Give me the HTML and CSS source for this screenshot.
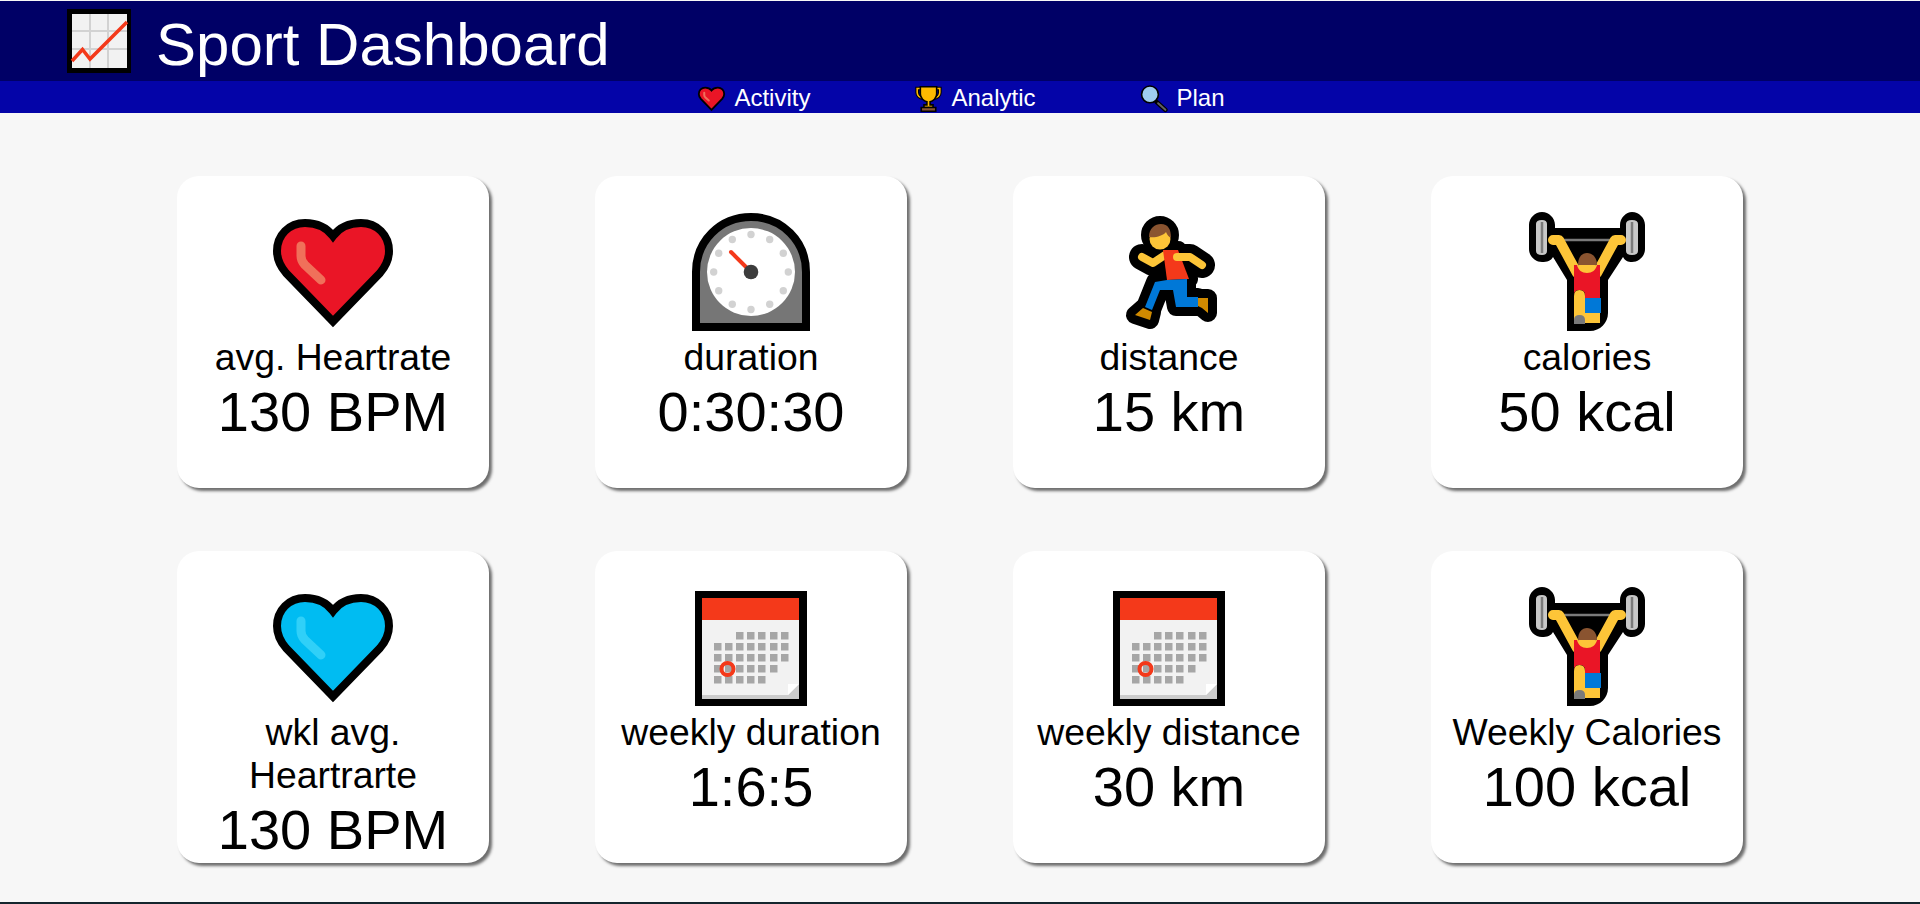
FILE: index.html
```html
<!DOCTYPE html>
<html>
<head>
    <title>Sport Dashboard</title>
    <link rel="stylesheet" href="styles.css">
</head>
<body>
<svg class="icon-defs">
    <symbol id="i-heart" viewBox="0 0 128 128">
        <path class="heart-fill" d="M64 29C70 21 80 16 92 16C108 16 120 28 120 44C120 52 117 59 111 66L64 114.500L17 66C11 59 8 52 8 44C8 28 20 16 36 16C48 16 58 21 64 29Z"/>
        <path class="heart-shine" d="M32 39V49Q32 54 36 58L52 73"/>
    </symbol>
    <symbol id="i-clock" viewBox="0 0 128 128">
        <path class="clock-case" d="M9 120V65C9 34 33 10 64 10C95 10 119 34 119 65V120Z"/>
        <circle class="clock-face" cx="64" cy="65" r="44"/>
        <g class="clock-dots">
            <circle cx="64" cy="27.5" r="3.7"/><circle cx="82.7" cy="32.5" r="3.7"/><circle cx="96.3" cy="46.2" r="3.7"/>
            <circle cx="101.3" cy="65" r="3.7"/><circle cx="96.3" cy="83.7" r="3.7"/><circle cx="82.7" cy="97.3" r="3.7"/>
            <circle cx="64" cy="102.5" r="3.7"/><circle cx="45.3" cy="97.3" r="3.7"/><circle cx="31.7" cy="83.7" r="3.7"/>
            <circle cx="26.7" cy="65" r="3.7"/><circle cx="31.7" cy="46.2" r="3.7"/><circle cx="45.3" cy="32.5" r="3.7"/>
        </g>
        <path class="clock-hand" d="M44 45L64 65"/>
        <circle class="clock-hub" cx="64" cy="65" r="7.3"/>
    </symbol>
    <symbol id="i-runner" viewBox="0 0 128 128">
        <g class="outline">
            <circle cx="55" cy="28" r="10"/>
            <path d="M58 43H73L84 72L62 73Z"/>
            <path class="outline-arms" d="M70 50H85L97 58M37 50L48 56L60 48"/>
            <path d="M62 73L82 72V90H93V100H71L68 83H55L47 103L40 100L50 75Z"/>
            <path d="M38 101L47 105L45 113L30 108ZM93 91H103V106L97 101L93 99Z"/>
        </g>
        <circle class="skin" cx="55" cy="32" r="10.5"/>
        <path class="hair" d="M44 30C44 21 50 17 56 17C63 17 66 22 66 31C64 30 62 28 61 25C58 29 50 31 44 30Z"/>
        <path class="limb skin-line" d="M37 50L48 56L60 48"/>
        <path class="shirt" d="M58 43H73L84 72L62 73Z"/>
        <path class="limb skin-line" d="M72 50H85L97 58"/>
        <path class="jeans" d="M62 73L82 72V90H93V100H71L68 83H55L47 103L40 100L50 75Z"/>
        <path class="shoe" d="M38 101L47 105L45 113L30 108ZM93 91H103V106L97 101L93 99Z"/>
    </symbol>
    <symbol id="i-lifter" viewBox="0 0 128 128">
        <path class="lifter-back" d="M19 5C26 5 32 11 32 18V21H97V18C97 11 103 5 109 5C116 5 122 11 122 18V42C122 49 116 55 109 55C105 55 102 54 100 50L85 73V106C85 116 77 124 67 124H44V73L30 50C28 54 24 55 19 55C12 55 6 49 6 42V18C6 11 12 5 19 5Z"/>
        <path class="bar" d="M30 33H98"/>
        <path class="plate" d="M13 17Q13 13 19 13Q24 13 24 17V44Q24 48 19 48Q13 48 13 44ZM103 17Q103 13 109 13Q115 13 115 17V44Q115 48 109 48Q103 48 103 44Z"/>
        <path class="plate-core" d="M19 15V46M109 15V46"/>
        <path class="limb-wide skin-line" d="M30 33H36L54 66M98 33H92L74 66"/>
        <path class="skin" d="M51 60Q64 53 77 60V72H51Z"/>
        <path class="hair" d="M55 58C55 50 59 46 64 46C69 46 74 50 74 58Z"/>
        <path class="top-red" d="M51 58H54C55 63 59 66 64 66C69 66 73 63 74 58H77V92H62V88Q62 83 56.500 83Q51 83 51 88Z"/>
        <path class="shorts" d="M62 91H78V106H62Z"/>
        <path class="skin" d="M51 89Q51 83 56.500 83Q62 83 62 89V106H77V116H51Z"/>
        <path class="sneaker" d="M51 117V113Q51 108 56.500 108Q62 108 62 113V117Z"/>
    </symbol>
    <symbol id="i-calendar" viewBox="0 0 128 128">
        <path class="cal-frame" d="M8 9H120V124H8Z"/>
        <path class="cal-page" d="M15 38H112V113H15Z"/>
        <path class="cal-foot" d="M15 113H112V117H15Z"/>
        <path class="cal-head" d="M15 16H112V38H15Z"/>
        <path class="cal-days" d="M49 50h7.500v7.500h-7.500zM60 50h7.500v7.500h-7.500zM71 50h7.500v7.500h-7.500zM83 50h7.500v7.500h-7.500zM94 50h7.500v7.500h-7.500z
            M27 61h7.500v7.500h-7.500zM38 61h7.500v7.500h-7.500zM49 61h7.500v7.500h-7.500zM60 61h7.500v7.500h-7.500zM71 61h7.500v7.500h-7.500zM83 61h7.500v7.500h-7.500zM94 61h7.500v7.500h-7.500z
            M27 72h7.500v7.500h-7.500zM38 72h7.500v7.500h-7.500zM49 72h7.500v7.500h-7.500zM60 72h7.500v7.500h-7.500zM71 72h7.500v7.500h-7.500zM83 72h7.500v7.500h-7.500zM94 72h7.500v7.500h-7.500z
            M27 83h7.500v7.500h-7.500zM38 83h7.500v7.500h-7.500zM49 83h7.500v7.500h-7.500zM60 83h7.500v7.500h-7.500zM71 83h7.500v7.500h-7.500zM83 83h7.500v7.500h-7.500z
            M27 94h7.500v7.500h-7.500zM38 94h7.500v7.500h-7.500zM49 94h7.500v7.500h-7.500zM60 94h7.500v7.500h-7.500zM71 94h7.500v7.500h-7.500z"/>
        <circle class="cal-mark" cx="40.500" cy="87" r="6"/>
        <path class="cal-fold" d="M101 113L112 102V113Z"/>
        <path class="cal-curl" d="M101 113V102H112Z"/>
    </symbol>
    <symbol id="i-chart" viewBox="0 0 64 64">
        <path d="M0 0H64V64H0Z"/>
        <path class="chart-paper" d="M5 5H60V59H5Z"/>
        <path class="chart-grid" d="M23 5V59M41 5V59M5 22H60M5 40H60"/>
        <path class="chart-line" d="M5 52L15.500 40.500L23 50L60 13"/>
    </symbol>
    <symbol id="i-trophy" viewBox="0 0 128 128">
        <path class="trophy-handle" d="M30 20H14V38C14 52 26 62 40 62M98 20H114V38C114 52 102 62 88 62"/>
        <path class="trophy-handle-gold" d="M30 20H14V38C14 52 26 62 40 62M98 20H114V38C114 52 102 62 88 62"/>
        <path class="trophy-cup" d="M28 12H100V44C100 62 84 76 71 78V92H84V104H44V92H57V78C44 76 28 62 28 44Z"/>
        <path class="trophy-base" d="M32 104H96V120H32Z"/>
    </symbol>
    <symbol id="i-search" viewBox="0 0 128 128">
        <path class="lens-handle" d="M74 80L112 114"/>
        <path class="lens-grip" d="M80 85L112 114"/>
        <circle class="lens" cx="44" cy="46" r="37"/>
    </symbol>
</svg>

<header class="top-bar">
    <svg class="logo"><use href="#i-chart"/></svg>
    <h1 class="brand">Sport Dashboard</h1>
</header>

<nav class="menu">
    <a class="menu-item"><svg class="menu-icon heart-red"><use href="#i-heart"/></svg>Activity</a>
    <a class="menu-item"><svg class="menu-icon"><use href="#i-trophy"/></svg>Analytic</a>
    <a class="menu-item"><svg class="menu-icon"><use href="#i-search"/></svg>Plan</a>
</nav>

<main class="board">
    <section class="card">
        <svg class="card-icon heart-red"><use href="#i-heart"/></svg>
        <div class="card-title">avg. Heartrate</div>
        <div class="card-value">130 BPM</div>
    </section>
    <section class="card">
        <svg class="card-icon"><use href="#i-clock"/></svg>
        <div class="card-title">duration</div>
        <div class="card-value">0:30:30</div>
    </section>
    <section class="card">
        <svg class="card-icon"><use href="#i-runner"/></svg>
        <div class="card-title">distance</div>
        <div class="card-value">15 km</div>
    </section>
    <section class="card">
        <svg class="card-icon"><use href="#i-lifter"/></svg>
        <div class="card-title">calories</div>
        <div class="card-value">50 kcal</div>
    </section>
    <section class="card">
        <svg class="card-icon heart-blue"><use href="#i-heart"/></svg>
        <div class="card-title">wkl avg. Heartrarte</div>
        <div class="card-value">130 BPM</div>
    </section>
    <section class="card">
        <svg class="card-icon"><use href="#i-calendar"/></svg>
        <div class="card-title">weekly duration</div>
        <div class="card-value">1:6:5</div>
    </section>
    <section class="card">
        <svg class="card-icon"><use href="#i-calendar"/></svg>
        <div class="card-title">weekly distance</div>
        <div class="card-value">30 km</div>
    </section>
    <section class="card">
        <svg class="card-icon"><use href="#i-lifter"/></svg>
        <div class="card-title">Weekly Calories</div>
        <div class="card-value">100 kcal</div>
    </section>
</main>

<div class="edge"></div>
</body>
</html>
```

FILE: styles.css
```css
* {
    box-sizing: border-box;
}

html, body {
    height: 100%;
    overflow: hidden;
}

body {
    margin: 0;
    display: flex;
    flex-direction: column;
    background-color: #f7f7f7;
    font-family: "Liberation Sans", Arial, sans-serif;
    color: #000000;
}

.icon-defs {
    display: none;
}

/* header */
.top-bar {
    height: 81px;
    display: flex;
    align-items: center;
    gap: 25px;
    padding-left: 67px;
    border-top: 1px solid #f7f7f7;
    background-color: #000066;
    color: #ffffff;
}

.logo {
    width: 64px;
    height: 64px;
}

.brand {
    margin: 7px 0 0;
    font-size: 45pt;
    font-weight: normal;
}

/* nav */
.menu {
    height: 32px;
    display: flex;
    justify-content: center;
    gap: 104px;
    padding: 1px 0 0 2px;
    background-color: #0404a8;
}

.menu-item {
    display: flex;
    align-items: center;
    gap: 8px;
    font-size: 18pt;
    color: #ffffff;
}

.menu-icon {
    width: 29px;
    height: 29px;
    margin-top: 2px;
}

/* cards */
.board {
    flex: 1;
    display: grid;
    grid-template-columns: repeat(4, 312px);
    grid-auto-rows: 312px;
    justify-content: center;
    gap: 63px 106px;
    padding-top: 63px;
}

.card {
    display: flex;
    flex-direction: column;
    align-items: center;
    padding-top: 31px;
    border-radius: 22px;
    background-color: #ffffff;
    box-shadow: 3px 3px 3px #6e6e6e;
    text-align: center;
}

.card-icon {
    width: 128px;
    height: 128px;
    flex: none;
    margin-bottom: 1px;
}

.card-title {
    font-size: 28pt;
}

.card-value {
    font-size: 42pt;
}

.edge {
    height: 2px;
    background-color: #14252d;
}

/* icon colours */
.heart-red {
    --heart: #ea1526;
    --shine: #f0705a;
}

.heart-blue {
    --heart: #00bcf2;
    --shine: #30d0f8;
}

.heart-fill {
    fill: var(--heart);
    stroke: #000000;
    stroke-width: 8;
}

.heart-shine {
    fill: none;
    stroke: var(--shine);
    stroke-width: 9;
    stroke-linecap: round;
    stroke-linejoin: round;
}

.clock-case {
    fill: #767676;
    stroke: #000000;
    stroke-width: 8;
}

.clock-face {
    fill: #ffffff;
}

.clock-dots {
    fill: #d2d2d2;
}

.clock-hand {
    stroke: #f4391a;
    stroke-width: 4;
    stroke-linecap: round;
}

.clock-hub {
    fill: #3c3c3c;
}

.outline {
    fill: #000000;
    stroke: #000000;
    stroke-width: 18;
    stroke-linejoin: round;
    stroke-linecap: round;
}

.outline-arms {
    fill: none;
    stroke-width: 26;
}

.skin {
    fill: #fdc538;
}

.hair {
    fill: #8a5430;
}

.shirt {
    fill: #f4391a;
}

.jeans {
    fill: #0078d7;
}

.shoe {
    fill: #d08a00;
}

.limb, .limb-wide {
    fill: none;
    stroke-linejoin: round;
    stroke-linecap: round;
}

.limb {
    stroke-width: 8;
}

.limb-wide {
    stroke-width: 10;
}

.skin-line {
    stroke: #fdc538;
}

.lifter-back {
    fill: #000000;
}

.bar {
    stroke: #7a7a7a;
    stroke-width: 2.5;
}

.plate {
    fill: #c8c8c8;
}

.plate-core {
    stroke: #7a7a7a;
    stroke-width: 2.5;
}

.top-red {
    fill: #ea1526;
}

.shorts {
    fill: #0078d7;
}

.sneaker {
    fill: #7a7a7a;
}

.cal-page {
    fill: #f2f2f2;
}

.cal-foot, .cal-fold {
    fill: #cccccc;
}

.cal-head {
    fill: #f4391a;
}

.cal-days {
    fill: #a6a6a6;
}

.cal-mark {
    fill: none;
    stroke: #f4391a;
    stroke-width: 4;
}

.cal-curl {
    fill: #ffffff;
}

.chart-paper {
    fill: #f2f2f2;
}

.chart-grid {
    fill: none;
    stroke: #d2d2d2;
    stroke-width: 2;
}

.chart-line {
    fill: none;
    stroke: #f4391a;
    stroke-width: 3.5;
}

.trophy-handle {
    fill: none;
    stroke: #000000;
    stroke-width: 16;
}

.trophy-handle-gold {
    fill: none;
    stroke: #fdb900;
    stroke-width: 7;
}

.trophy-cup {
    fill: #fdb900;
    stroke: #000000;
    stroke-width: 7;
}

.trophy-base {
    fill: #8a5430;
    stroke: #000000;
    stroke-width: 7;
}

.lens-handle {
    stroke: #000000;
    stroke-width: 20;
    stroke-linecap: round;
}

.lens-grip {
    stroke: #606060;
    stroke-width: 9;
    stroke-linecap: round;
}

.lens {
    fill: #9ecdf0;
    stroke: #000000;
    stroke-width: 7;
}
```
